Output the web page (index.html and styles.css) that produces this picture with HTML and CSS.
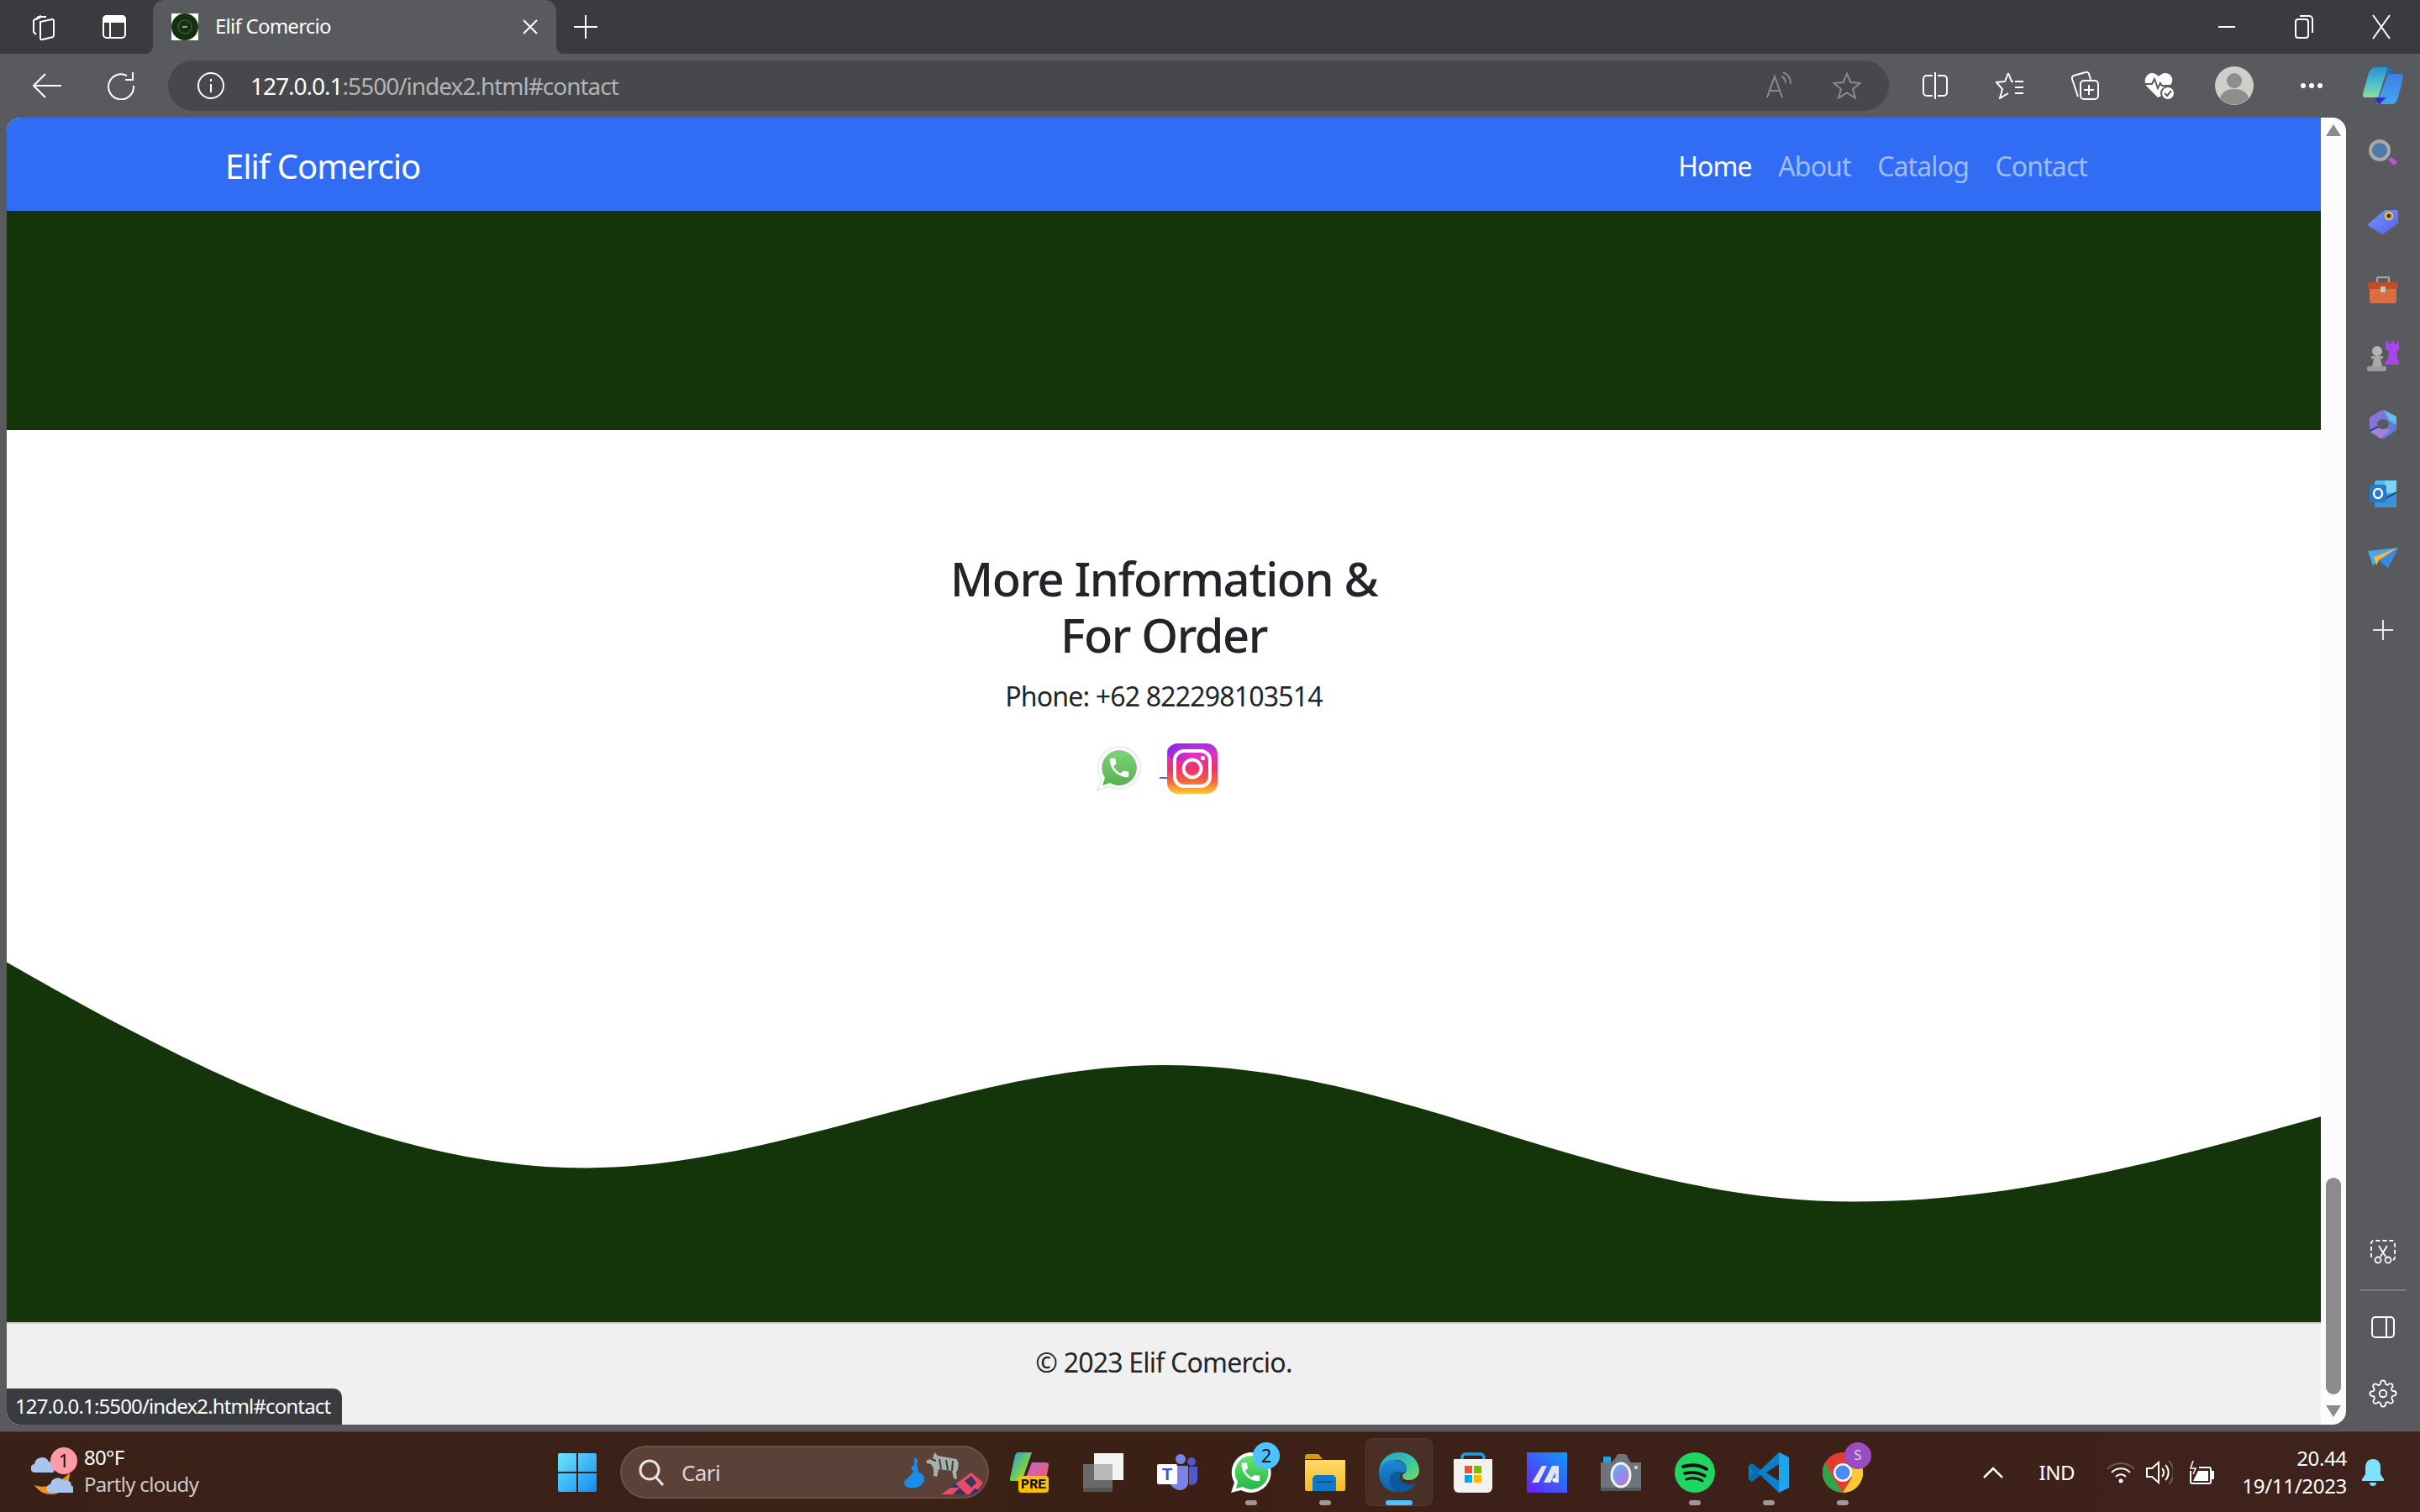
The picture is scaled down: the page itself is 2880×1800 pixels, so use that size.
FILE: index.html
```html
<!DOCTYPE html>
<html lang="en">
	<head>
		<meta charset="UTF-8">
		<title>Elif Comercio</title>
		<link rel="stylesheet" href="styles.css">
	</head>
	<body>
		<!-- tab strip -->
		<div class="tabstrip">
			<div class="strip-btn">
				<svg width="34" height="34" viewBox="0 0 34 34" fill="none" stroke="#fff" stroke-width="2"><path d="M5 9l6-3M5 9v14l3 3M9 6l5-2M8 8l6-3 6 0"/><path d="M14 11l14-3a2 2 0 0 1 2 2v17a2 2 0 0 1-1 2l-12 3a2 2 0 0 1-3-2z" transform="translate(-1 0)"/></svg>
			</div>
			<div class="strip-btn">
				<svg width="30" height="30" viewBox="0 0 30 30" fill="none" stroke="#fff" stroke-width="2"><rect x="2" y="2" width="26" height="26" rx="4"/><path d="M2 9V6a4 4 0 0 1 4-4h18a4 4 0 0 1 4 4v3z" fill="#fff"/><path d="M10 9v19"/></svg>
			</div>
			<div class="tab">
				<svg class="favicon" width="32" height="32" viewBox="0 0 32 32"><rect width="32" height="32" fill="#fff"/><circle cx="16" cy="16" r="16" fill="#14300f"/><circle cx="16" cy="16" r="8" fill="none" stroke="#3a5a30" stroke-width="1.5"/><rect x="13" y="15" width="6" height="2" fill="#9aa890"/></svg>
				<span class="tab-title">Elif Comercio</span>
				<svg class="tab-close" width="20" height="20" viewBox="0 0 20 20" stroke="#fff" stroke-width="2"><path d="M2 2l16 16M18 2L2 18"/></svg>
			</div>
			<div class="plus-btn">
				<svg width="30" height="30" viewBox="0 0 30 30" stroke="#fff" stroke-width="2"><path d="M15 1v28M1 15h28"/></svg>
			</div>
			<div class="win-controls">
				<div class="win-btn"><svg width="20" height="20" viewBox="0 0 20 20" stroke="#fff" stroke-width="2"><path d="M0 10h20"/></svg></div>
				<div class="win-btn"><svg width="22" height="30" viewBox="0 0 22 30" fill="none" stroke="#fff" stroke-width="2"><rect x="1" y="6" width="15" height="22" rx="3"/><path d="M6 2h11a4 4 0 0 1 4 4v16"/></svg></div>
				<div class="win-btn"><svg width="22" height="30" viewBox="0 0 22 30" stroke="#fff" stroke-width="2"><path d="M1 1l20 28M21 1L1 29"/></svg></div>
			</div>
		</div>

		<!-- toolbar -->
		<div class="toolbar">
			<div class="tool-btn">
				<svg width="34" height="30" viewBox="0 0 34 30" fill="none" stroke="#fff" stroke-width="2"><path d="M15 1L1 15l14 14M1 15h33"/></svg>
			</div>
			<div class="tool-btn">
				<svg width="34" height="34" viewBox="0 0 34 34" fill="none" stroke="#fff" stroke-width="2"><path d="M24 5A15 15 0 1 0 32 17"/><path d="M31 1v9h-9"/></svg>
			</div>
			<div class="address">
				<svg width="32" height="32" viewBox="0 0 32 32" fill="none" stroke="#fff" stroke-width="2"><circle cx="16" cy="16" r="15"/><path d="M16 14v10M16 8v3"/></svg>
				<div class="url"><span class="url-host">127.0.0.1</span>:5500/index2.html#contact</div>
				<svg class="addr-read" width="32" height="32" viewBox="0 0 32 32" fill="none" stroke="#8a8b8e" stroke-width="2"><path d="M1 30L10 5l9 25M4 22h12"/><path d="M18 5c3 1 5 4 5 8M20 0c5 2 9 7 9 14"/></svg>
				<svg class="addr-star" width="34" height="32" viewBox="0 0 34 32" fill="none" stroke="#8a8b8e" stroke-width="2"><path d="M17 2l4.500 10 11 1-8.500 7 3 10.500-10-6-10 6 3-10.500-8.500-7 11-1z"/></svg>
			</div>
			<div class="tool-group">
				<div class="tool-btn tool-btn-r">
					<svg width="30" height="32" viewBox="0 0 30 32" fill="none" stroke="#fff" stroke-width="2"><path d="M12 4H5a4 4 0 0 0-4 4v16a4 4 0 0 0 4 4h7M18 4h7a4 4 0 0 1 4 4v16a4 4 0 0 1-4 4h-7M15 0v32"/></svg>
				</div>
				<div class="tool-btn tool-btn-r">
					<svg width="34" height="32" viewBox="0 0 34 32" fill="none" stroke="#fff" stroke-width="2"><path d="M15 1l4 10 2 0M11 11l4-10M11 11L1 12l7 8-3 11 10-6"/><path d="M23 11h10M23 18h10M23 25h10"/></svg>
				</div>
				<div class="tool-btn tool-btn-r">
					<svg width="34" height="34" viewBox="0 0 34 34" fill="none" stroke="#fff" stroke-width="2"><path d="M9 30L2 9a3 3 0 0 1 2-4l14-4a3 3 0 0 1 4 2l2 7"/><rect x="12" y="11" width="21" height="22" rx="4"/><path d="M22 16v12M16 22h12"/></svg>
				</div>
				<div class="tool-btn tool-btn-r">
					<svg width="36" height="34" viewBox="0 0 36 34"><path d="M16 31L3 18C-2 12 2 2 9 2c3 0 6 2 8 4 2-2 5-4 8-4 7 0 11 8 6 14L25 27z" fill="#fff"/><path d="M1 15h8l3-6 4 11 3-6 2 3h12" fill="none" stroke="#595a5e" stroke-width="2"/><circle cx="28" cy="26" r="8" fill="#fff" stroke="#595a5e" stroke-width="2"/><path d="M24 26l3 3 5-6" fill="none" stroke="#595a5e" stroke-width="2"/></svg>
				</div>
				<div class="tool-btn tool-btn-r">
					<svg width="46" height="46" viewBox="0 0 46 46"><circle cx="23" cy="23" r="23" fill="#cfcecb"/><circle cx="23" cy="17" r="9" fill="#8d8d8b"/><path d="M6 38c2-8 9-11 17-11s15 3 17 11a23 23 0 0 1-34 0z" fill="#8d8d8b"/></svg>
				</div>
				<div class="tool-btn tool-btn-more">
					<svg width="26" height="8" viewBox="0 0 26 8" fill="#fff"><circle cx="3" cy="4" r="3"/><circle cx="13" cy="4" r="3"/><circle cx="23" cy="4" r="3"/></svg>
				</div>
				<div class="tool-copilot">
					<svg width="48" height="44" viewBox="0 0 48 44">
						<defs>
							<linearGradient id="cpA" x1="0" y1="0" x2="0" y2="1"><stop offset="0" stop-color="#2a8fd0"/><stop offset=".6" stop-color="#58c4c8"/><stop offset="1" stop-color="#8ddc9a"/></linearGradient>
							<linearGradient id="cpB" x1="0" y1="0" x2="0" y2="1"><stop offset="0" stop-color="#3e7fe6"/><stop offset="1" stop-color="#44a6ee"/></linearGradient>
						</defs>
						<path d="M14 0h16l-12 36H3a3 3 0 0 1-3-4l6-22C8 4 10 0 14 0z" fill="url(#cpA)"/>
						<path d="M30 0c3 0 4 2 6 8l-8 0z" fill="#1e6fb8"/>
						<path d="M30 8h15a3 3 0 0 1 3 4l-6 24c-2 6-4 8-8 8H16z" fill="url(#cpB)"/>
						<path d="M18 36h10l-8 8c-3 0-4-3-6-8z" fill="#2a36c0"/>
					</svg>
				</div>
			</div>
		</div>

		<div class="main">
			<div class="window">
				<div class="page">
					<div class="navbar">
						<a class="brand" href="#">Elif Comercio</a>
						<div class="nav-links">
							<a class="active" href="#">Home</a>
							<a href="#">About</a>
							<a href="#">Catalog</a>
							<a href="#">Contact</a>
						</div>
					</div>
					<div class="band"></div>
					<div class="contact">
						<h2>More Information &amp;<br>For Order</h2>
						<p>Phone: +62 822298103514</p>
						<div class="socials">
							<svg class="wa" width="54" height="54" viewBox="0 0 54 54">
								<defs>
									<linearGradient id="waG" x1="0" y1="0" x2="0" y2="1"><stop offset="0" stop-color="#7fd27a"/><stop offset="1" stop-color="#56b24f"/></linearGradient>
								</defs>
								<path d="M27 1a25 25 0 1 1-12 47L1 53l5-13A25 25 0 0 1 27 1z" fill="#fff" stroke="#e8e8e8" stroke-width="1.500"/>
								<path d="M27 5a21 21 0 1 1-11 39l-9 3 3-9A21 21 0 0 1 27 5z" fill="url(#waG)"/>
								<path transform="translate(12 11) scale(1.250)" d="M6.620 10.790c1.440 2.830 3.760 5.140 6.590 6.590l2.200-2.200c.27-.27.67-.36 1.020-.24 1.120.37 2.330.57 3.570.57.55 0 1 .45 1 1V20c0 .55-.45 1-1 1-9.390 0-17-7.610-17-17 0-.55.45-1 1-1h3.500c.55 0 1 .45 1 1 0 1.250.2 2.450.57 3.570.11.35.03.74-.25 1.020l-2.200 2.200z" fill="#fff"/>
							</svg>
							<a class="ig-link" href="#">
								<svg width="60" height="60" viewBox="0 0 60 60">
									<defs>
										<linearGradient id="igG" x1="0" y1="1" x2="0" y2="0"><stop offset="0" stop-color="#fdc935"/><stop offset=".25" stop-color="#f3653a"/><stop offset=".5" stop-color="#ef2f6e"/><stop offset=".8" stop-color="#e032c8"/><stop offset="1" stop-color="#a030e8"/></linearGradient>
										<linearGradient id="igH" x1="0" y1="0" x2="1" y2="0"><stop offset="0" stop-color="#7a20f0" stop-opacity=".7"/><stop offset=".5" stop-color="#7a20f0" stop-opacity="0"/></linearGradient>
									</defs>
									<rect width="60" height="60" rx="13" fill="url(#igG)"/>
									<rect width="60" height="20" rx="13" fill="url(#igH)"/>
									<rect x="9" y="9" width="42" height="42" rx="11" fill="none" stroke="#fff" stroke-width="4"/>
									<circle cx="30" cy="30" r="10.500" fill="none" stroke="#fff" stroke-width="4"/>
									<circle cx="42.500" cy="17.500" r="2.600" fill="#fff"/>
								</svg>
							</a>
						</div>
					</div>
					<svg class="wave" viewBox="0 0 1440 320" preserveAspectRatio="none"><path d="M0,96 C120,165 240,224 360,224 C480,224 600,160 720,160 C870,160 990,245 1150,245 C1250,245 1340,220 1440,192 L1440,320 L0,320 Z" fill="#14340a"/></svg>
					<div class="footer">© 2023 Elif Comercio.</div>
				</div>
				<div class="scrollbar">
					<div class="arrow-up"></div>
					<div class="thumb"></div>
					<div class="arrow-down"></div>
				</div>
				<div class="status">127.0.0.1:5500/index2.html#contact</div>
			</div>

			<!-- edge sidebar -->
			<div class="sidebar">
				<div class="side-btn">
					<svg width="36" height="36" viewBox="0 0 36 36"><circle cx="14" cy="14" r="11" fill="#4f7aa6" stroke="#a9a9a9" stroke-width="4"/><path d="M24 25l4-3 7 6-4 4z" fill="#c04fe0"/></svg>
				</div>
				<div class="side-btn">
					<svg width="36" height="30" viewBox="0 0 36 30"><defs><linearGradient id="tagG" x1="0" y1="0" x2="1" y2="1"><stop offset="0" stop-color="#6c9cf8"/><stop offset="1" stop-color="#5a5cec"/></linearGradient></defs><path d="M1 17L20 1h14a2 2 0 0 1 2 2v14L19 29a3 3 0 0 1-4 0L1 20a2 2 0 0 1 0-3z" fill="url(#tagG)"/><circle cx="25" cy="8" r="4" fill="#3a3a50" stroke="#f2c53a" stroke-width="2.500"/></svg>
				</div>
				<div class="side-btn">
					<svg width="36" height="32" viewBox="0 0 36 32"><path d="M11 7V3a2 2 0 0 1 2-2h10a2 2 0 0 1 2 2v4" fill="none" stroke="#a0a0a0" stroke-width="2.500"/><path d="M2 14h32v15a3 3 0 0 1-3 3H5a3 3 0 0 1-3-3z" fill="#d86f42"/><rect y="7" width="36" height="8" rx="2" fill="#bf4f28"/><rect x="15" y="12" width="6" height="7" rx="1" fill="#c4c4c4"/></svg>
				</div>
				<div class="side-btn">
					<svg class="side-up" width="38" height="36" viewBox="0 0 38 36"><path d="M22 0h3v3h4V0h3v3h4V0h2v10l-3 2 1 10 3 3v3H21v-3l4-3 1-10-4-2z" fill="#a846ec"/><circle cx="12" cy="12" r="6" fill="#b4b4b4"/><path d="M5 18h14v3h-3l2 9h-12l2-9H5z" fill="#a8a8a8"/><rect y="30" width="23" height="6" rx="2" fill="#9c9c9c"/></svg>
				</div>
				<div class="side-btn">
					<svg class="side-up" width="32" height="36" viewBox="0 0 32 36"><defs><linearGradient id="msG" x1="0" y1="0" x2="1" y2="1"><stop offset="0" stop-color="#9a6fd8"/><stop offset="1" stop-color="#4a7fe0"/></linearGradient></defs><path d="M0 10L13 2c2-1 4-1 6 0l13 7v16l-13 9c-3 2-5 2-8 0L0 27z" fill="url(#msG)"/><path d="M17 1l15 8v10l-9-6z" fill="#5cc0e8"/><path d="M0 25l10-6 14 7-11 9z" fill="#a77fd6"/><path d="M0 26l18-9" stroke="#1d3f8a" stroke-width="2"/><ellipse cx="16" cy="18" rx="7" ry="6" fill="#595a5e"/></svg>
				</div>
				<div class="side-btn">
					<svg width="32" height="32" viewBox="0 0 32 32"><rect x="6" width="26" height="32" rx="2" fill="#55b8ee"/><rect x="18" width="14" height="14" fill="#7cd4f8"/><path d="M6 16l26 0v14a2 2 0 0 1-2 2H8a2 2 0 0 1-2-2z" fill="#3a93d8"/><path d="M18 22l14-8" stroke="#14447a" stroke-width="2"/><rect y="5" width="20" height="21" rx="3" fill="#2878c8"/><ellipse cx="10" cy="15.500" rx="5" ry="5.500" fill="none" stroke="#fff" stroke-width="2.500"/></svg>
				</div>
				<div class="side-btn">
					<svg class="side-send" width="36" height="24" viewBox="0 0 36 24"><path d="M0 4l36-4-12 24-12-10-6 8z" fill="#4aa6ec"/><path d="M36 0L7 11l3 10 3-6z" fill="#f2b93a"/><path d="M13 15l11 9 12-24z" fill="#3a88e0"/></svg>
				</div>
				<div class="side-btn">
					<svg width="24" height="24" viewBox="0 0 24 24" stroke="#e8e8e8" stroke-width="2"><path d="M12 0v24M0 12h24"/></svg>
				</div>
				<div class="side-spacer"></div>
				<div class="side-btn">
					<svg width="32" height="30" viewBox="0 0 32 30" fill="none" stroke="#fff" stroke-width="1.800"><path d="M2 22V5a3 3 0 0 1 3-3h22a3 3 0 0 1 3 3v17a3 3 0 0 1-3 3" stroke-dasharray="5 3"/><path d="M11 8l8 13M21 8l-8 13"/><circle cx="10" cy="25" r="3.500"/><circle cx="22" cy="25" r="3.500"/></svg>
				</div>
				<div class="side-line"></div>
				<div class="side-btn side-panel">
					<svg width="28" height="26" viewBox="0 0 28 26" fill="none" stroke="#fff" stroke-width="2"><rect x="1" y="1" width="26" height="24" rx="4"/><path d="M18 1v24"/></svg>
				</div>
				<div class="side-btn side-gear">
					<svg width="34" height="34" viewBox="0 0 24 24" fill="none" stroke="#fff" stroke-width="1.300"><circle cx="12" cy="12" r="3"/><path d="M19.400 15a1.650 1.650 0 0 0 .33 1.820l.06.06a2 2 0 1 1-2.830 2.830l-.06-.06a1.650 1.650 0 0 0-2.800 1.170V21a2 2 0 1 1-4 0v-.09a1.650 1.650 0 0 0-2.800-1.170l-.06.06a2 2 0 1 1-2.830-2.830l.06-.06a1.650 1.650 0 0 0-1.170-2.800H3a2 2 0 1 1 0-4h.09a1.650 1.650 0 0 0 1.170-2.800l-.06-.06a2 2 0 1 1 2.830-2.830l.06.06a1.650 1.650 0 0 0 2.800-1.170V3a2 2 0 1 1 4 0v.09a1.650 1.650 0 0 0 2.800 1.170l.06-.06a2 2 0 1 1 2.830 2.830l-.06.06a1.650 1.650 0 0 0 1.170 2.800H21a2 2 0 1 1 0 4h-.09a1.650 1.650 0 0 0-1.510 1.110z"/></svg>
				</div>
			</div>
		</div>

		<!-- windows taskbar -->
		<div class="taskbar">
			<div class="weather">
				<div class="weather-icon">
					<svg width="50" height="54" viewBox="0 0 50 54">
						<path d="M46 27c0 12-7 26-22 26-9 0-15-4-20-11 10 3 17 2 24-2 8-4 14-8 18-13z" fill="#f0921c"/>
						<path d="M5 27a5 5 0 0 1-1-10 9 9 0 0 1 17-3 6 6 0 0 1 5 8 3 3 0 0 1 0 5z" fill="#a9c4ef"/>
						<path d="M24 51a5 5 0 0 1-1-10 9 9 0 0 1 16-4 6 6 0 0 1 9 6 4 4 0 0 1 0 8z" fill="#a9c4ef"/>
					</svg>
					<span class="weather-badge">1</span>
				</div>
				<div class="weather-text">
					<div class="temp">80°F</div>
					<div class="cond">Partly cloudy</div>
				</div>
			</div>
			<div class="tb-start">
				<svg width="46" height="46" viewBox="0 0 46 46"><defs><linearGradient id="winG" x1="0" y1="0" x2="1" y2="1"><stop offset="0" stop-color="#6fe6ff"/><stop offset="1" stop-color="#0f8cf0"/></linearGradient></defs><path d="M0 2a2 2 0 0 1 2-2h20v22H0zM24 0h20a2 2 0 0 1 2 2v20H24zM0 24h22v22H2a2 2 0 0 1-2-2zM24 24h22v20a2 2 0 0 1-2 2H24z" fill="url(#winG)"/></svg>
			</div>
			<div class="search">
				<svg width="30" height="32" viewBox="0 0 30 32" fill="none" stroke="#e8e4e2" stroke-width="3"><circle cx="13" cy="13" r="11"/><path d="M21 22l8 9"/></svg>
				<span class="search-text">Cari</span>
				<svg class="search-art" width="94" height="50" viewBox="0 0 94 50">
					<path transform="translate(0 2) scale(1 .84)" d="M12 6a4 4 0 0 1 3 7l2 12c5 3 7 6 7 10 0 8-7 13-14 13-6 0-10-3-10-7 0-5 7-8 11-16l-1-2a4 4 0 0 1 2-7z" fill="#1a8cea"/>
					<path d="M26 10l8-3 2-7 4 4 22 4c4 3 3 12 0 16l1 8-4-1-2-9-16-2-2 9-4-1v-9l-3-5-5-1z" fill="#a8b0aa"/>
					<path d="M32 8l6 2M42 8l2 12M50 9l2 12M58 10l-1 12" stroke="#3a3e3c" stroke-width="2" fill="none"/>
					<path d="M44 50l36-26 14 12-10 14z" fill="#e84a6a"/>
					<path d="M58 50l8-8 8 8zM72 34l8-6 6 8-6 6zM54 42l6-6 6 6zM78 50l6-7 6 2-4 5z" fill="#3a3460"/>
				</svg>
			</div>
			<div class="tb-apps">
				<div class="tb-app">
					<svg width="46" height="48" viewBox="0 0 46 48">
						<defs><linearGradient id="preA" x1="0" y1="0" x2="1" y2="1"><stop offset="0" stop-color="#1e9ce8"/><stop offset=".6" stop-color="#7cd04a"/><stop offset="1" stop-color="#f0d020"/></linearGradient><linearGradient id="preB" x1="0" y1="0" x2="1" y2="1"><stop offset="0" stop-color="#c060e0"/><stop offset="1" stop-color="#f06050"/></linearGradient></defs>
						<path d="M10 0h16L14 34H1a2 2 0 0 1-1-3L5 8c1-5 2-8 5-8z" fill="url(#preA)"/>
						<path d="M26 12h17a3 3 0 0 1 3 4l-3 16H18z" fill="url(#preB)"/>
						<rect x="10" y="28" width="36" height="20" rx="4" fill="#ffc000"/>
						<text class="pre-text" x="28" y="43" text-anchor="middle">PRE</text>
					</svg>
				</div>
				<div class="tb-app">
					<svg width="48" height="46" viewBox="0 0 48 46"><rect x="13" width="35" height="32" fill="#f4f4f4"/><rect y="13" width="35" height="33" fill="#6a6a6a"/><rect x="13" y="13" width="22" height="19" fill="#b8b8b8"/><rect y="41" width="35" height="5" fill="#555"/></svg>
				</div>
				<div class="tb-app">
					<svg width="48" height="44" viewBox="0 0 48 44">
						<circle cx="28" cy="6" r="6" fill="#7b83eb"/><circle cx="41" cy="9" r="5" fill="#5059c9"/>
						<path d="M15 14h22v20a9 9 0 0 1-9 9c-7 0-13-5-13-12z" fill="#7b83eb"/><path d="M38 15h10v15c0 5-4 8-10 6z" fill="#5059c9"/>
						<rect y="12" width="24" height="24" rx="2" fill="#fff"/><text class="teams-t" x="12" y="31" text-anchor="middle">T</text>
					</svg>
				</div>
				<div class="tb-app">
					<svg width="50" height="50" viewBox="0 0 50 50"><defs><linearGradient id="waT" x1="0" y1="0" x2="0" y2="1"><stop offset="0" stop-color="#6be36e"/><stop offset="1" stop-color="#22b84a"/></linearGradient></defs><path d="M25 1a24 24 0 1 1-12 45L1 49l4-12A24 24 0 0 1 25 1z" fill="#fff"/><path d="M25 5a20 20 0 1 1-10 37l-8 2 2-8A20 20 0 0 1 25 5z" fill="url(#waT)"/><path transform="translate(10 10) scale(1.200)" d="M6.620 10.790c1.440 2.830 3.760 5.140 6.590 6.590l2.200-2.200c.27-.27.67-.36 1.020-.24 1.120.37 2.330.57 3.570.57.55 0 1 .45 1 1V20c0 .55-.45 1-1 1-9.390 0-17-7.610-17-17 0-.55.45-1 1-1h3.500c.55 0 1 .45 1 1 0 1.250.2 2.450.57 3.570.11.35.03.74-.25 1.020l-2.200 2.200z" fill="#fff"/></svg>
					<span class="app-badge app-badge-blue">2</span>
					<span class="pill"></span>
				</div>
				<div class="tb-app">
					<svg width="48" height="44" viewBox="0 0 48 44"><defs><linearGradient id="foldG" x1="0" y1="0" x2="0" y2="1"><stop offset="0" stop-color="#ffdb6a"/><stop offset="1" stop-color="#fbb81e"/></linearGradient></defs><path d="M0 3a3 3 0 0 1 3-3h13l5 6H0z" fill="#d99a00"/><path d="M0 7h48v35a2 2 0 0 1-2 2H2a2 2 0 0 1-2-2z" fill="url(#foldG)"/><path d="M9 44V30a5 5 0 0 1 5-5h18a5 5 0 0 1 5 5v14z" fill="#0f78c8"/><rect x="14" y="32" width="18" height="2" fill="#0a4f90"/></svg>
					<span class="pill"></span>
				</div>
				<div class="tb-app tb-app-active">
					<svg width="48" height="48" viewBox="0 0 48 48">
						<defs><linearGradient id="edgeA" x1="0" y1="0" x2="1" y2="1"><stop offset="0" stop-color="#1fa0d8"/><stop offset=".6" stop-color="#3ec9a0"/><stop offset="1" stop-color="#7ad85a"/></linearGradient><linearGradient id="edgeB" x1="0" y1="0" x2="0" y2="1"><stop offset="0" stop-color="#1d8ad8"/><stop offset="1" stop-color="#0f5fa8"/></linearGradient></defs>
						<path d="M24 0c14 0 24 10 24 22 0 6-5 11-12 11-5 0-8-2-8-5 0-3 5-3 5-8C33 13 26 8 18 9 8 10 2 16 0 24 1 10 10 0 24 0z" fill="url(#edgeA)"/>
						<path d="M0 24c1-10 10-15 18-15 8 0 15 5 15 11 0 3-3 4-6 4-7-3-14 0-14 9 0 6 4 11 11 14C11 49 0 38 0 24z" fill="url(#edgeB)"/>
						<path d="M27 24c-7-3-14 0-14 9 0 6 4 11 11 14 8 1 17-3 21-11-3 2-6 3-10 2-8-1-13-6-8-14z" fill="#0c5a9e"/>
					</svg>
					<span class="pill pill-edge"></span>
				</div>
				<div class="tb-app">
					<svg width="46" height="48" viewBox="0 0 46 48"><path d="M10 10V6a4 4 0 0 1 4-4h18a4 4 0 0 1 4 4v4" fill="none" stroke="#1aa0e8" stroke-width="3.500"/><path d="M0 8h46v34a6 6 0 0 1-6 6H6a6 6 0 0 1-6-6z" fill="#f4f2f0"/><rect x="13" y="16" width="9" height="9" fill="#f25022"/><rect x="24" y="16" width="9" height="9" fill="#7fba00"/><rect x="13" y="27" width="9" height="9" fill="#00a4ef"/><rect x="24" y="27" width="9" height="9" fill="#ffb900"/></svg>
				</div>
				<div class="tb-app">
					<svg width="48" height="48" viewBox="0 0 48 48"><defs><linearGradient id="maG" x1="1" y1="0" x2="0" y2="1"><stop offset="0" stop-color="#0a9cf8"/><stop offset="1" stop-color="#6a20f8"/></linearGradient></defs><rect width="48" height="48" fill="url(#maG)"/><path d="M6 36l12-20h6L14 36zM20 36l10-20h8v20h-4V24l-6 12z" fill="#e4e4f8"/><circle cx="33" cy="33" r="2.500" fill="#fff"/></svg>
				</div>
				<div class="tb-app">
					<svg width="48" height="44" viewBox="0 0 48 44"><rect x="3" y="3" width="9" height="7" fill="#2aa0d8"/><path d="M0 10h13l5-6c0-2 2-4 4-4h6c2 0 4 2 4 4l4 6h12v34H0z" fill="#6f7479"/><rect y="40" width="48" height="4" fill="#55585c"/><defs><linearGradient id="camG" x1="0" y1="0" x2="1" y2="1"><stop offset="0" stop-color="#5ab0f0"/><stop offset="1" stop-color="#c070d8"/></linearGradient></defs><ellipse cx="24" cy="25" rx="11" ry="14" fill="url(#camG)" stroke="#f2f2f2" stroke-width="3"/><circle cx="42" cy="16" r="2" fill="#ddd"/></svg>
				</div>
				<div class="tb-app">
					<svg width="48" height="48" viewBox="0 0 48 48" fill="none" stroke="#111" stroke-linecap="round"><circle cx="24" cy="24" r="24" fill="#1ed760" stroke="none"/><path d="M10 17c10-3 20-2 28 3" stroke-width="4"/><path d="M12 25c8-2 17-1 24 3" stroke-width="3.500"/><path d="M14 32c7-2 14-1 19 2" stroke-width="3"/></svg>
					<span class="pill"></span>
				</div>
				<div class="tb-app">
					<svg width="48" height="48" viewBox="0 0 48 48"><path d="M36 0l12 6v36l-12 6L14 27 4 35l-4-3V16l4-3 10 8z" fill="#0b7fc8"/><path d="M36 0l12 6v36l-12 6z" fill="#1fa3ec"/><path d="M36 14L21 24l15 10z" fill="#3b2118"/><path d="M0 16l4-3 10 8-4 3 4 3-10 8-4-3 6-8z" fill="#0a6bb0"/></svg>
					<span class="pill"></span>
				</div>
				<div class="tb-app">
					<svg width="48" height="48" viewBox="0 0 48 48"><circle cx="24" cy="24" r="24" fill="#e33b2e"/><path d="M3 12l12 22 9 14a24 24 0 0 1-21-36z" fill="#2fa44f"/><path d="M24 14h22a24 24 0 0 1-22 34l11-18z" fill="#fcc934"/><circle cx="24" cy="24" r="11" fill="#fff"/><circle cx="24" cy="24" r="8.500" fill="#4a8af4"/></svg>
					<span class="app-badge app-badge-purple">S</span>
					<span class="pill"></span>
				</div>
			</div>
			<div class="tray">
				<svg class="tray-chev" width="24" height="14" viewBox="0 0 24 14" fill="none" stroke="#fff" stroke-width="2.500"><path d="M1 13L12 2l11 11"/></svg>
				<span class="tray-lang">IND</span>
				<svg class="tray-wifi" width="34" height="26" viewBox="0 0 34 26" fill="none" stroke="#fff" stroke-width="2"><path d="M1 9a22 22 0 0 1 32 0" stroke="#6a5a55"/><path d="M6 13a15 15 0 0 1 22 0M11 18a8 8 0 0 1 12 0"/><circle cx="17" cy="23" r="2.500" fill="#fff" stroke="none"/></svg>
				<svg class="tray-vol" width="32" height="30" viewBox="0 0 32 30" fill="none" stroke="#fff" stroke-width="2"><path d="M1 10h6l8-7v24l-8-7H1z"/><path d="M19 10a7 7 0 0 1 0 10M23 6a13 13 0 0 1 0 18"/><path d="M27 1a20 20 0 0 1 0 28" stroke="#6a5a55"/></svg>
				<svg class="tray-bat" width="32" height="28" viewBox="0 0 32 28" fill="none" stroke="#fff" stroke-width="2"><path d="M4 12v13a2 2 0 0 0 2 2h20a2 2 0 0 0 2-2V10a2 2 0 0 0-2-2H14"/><path d="M28 13h3v8h-3" fill="#fff"/><path d="M7 24l6-12h12v12z" fill="#fff" stroke="none"/><path d="M7 0L4 9h6l-3 7" stroke-width="1.500"/></svg>
				<div class="clock">
					<div>20.44</div>
					<div>19/11/2023</div>
				</div>
				<svg class="tray-bell" width="26" height="32" viewBox="0 0 26 32" fill="#7fe2fa"><path d="M13 0c6 0 9 4 9 10v8l4 6v2H0v-2l4-6v-8C4 4 7 0 13 0z"/><path d="M9 28h8a4 4 0 0 1-8 0z"/></svg>
			</div>
		</div>
	</body>
</html>
```

FILE: styles.css
```css
* {
	margin: 0;
	padding: 0;
	box-sizing: border-box;
}

html,
body {
	width: 2880px;
	height: 1800px;
	overflow: hidden;
}

body {
	background-color: #595a5e;
	font-family: "Noto Sans", "Open Sans", sans-serif;
	color: #212529;
}

a {
	text-decoration: none;
}

/* tab strip */
.tabstrip {
	display: flex;
	height: 64px;
	background-color: #3a3b3f;
	padding-left: 10px;
}

.strip-btn {
	width: 84px;
	display: flex;
	align-items: center;
	justify-content: center;
}

.tab {
	position: relative;
	width: 480px;
	margin-left: 4px;
	display: flex;
	align-items: center;
	padding: 0 21px 0 22px;
	background-color: #595a5e;
	border-radius: 14px 14px 0 0;
	color: #fff;
}

.tab::before,
.tab::after {
	content: "";
	position: absolute;
	bottom: 0;
	width: 10px;
	height: 10px;
}

.tab::before {
	left: -10px;
	background: radial-gradient(circle at 0 0, #3a3b3f 10px, #595a5e 10.500px);
}

.tab::after {
	right: -10px;
	background: radial-gradient(circle at 100% 0, #3a3b3f 10px, #595a5e 10.500px);
}

.tab-title {
	margin: 0 0 3px 20px;
	font-size: 24px;
	letter-spacing: -0.75px;
}

.tab-close {
	margin-left: auto;
}

.plus-btn {
	width: 70px;
	display: flex;
	align-items: center;
	justify-content: center;
}

.win-controls {
	display: flex;
	margin-left: auto;
}

.win-btn {
	width: 92px;
	display: flex;
	align-items: center;
	justify-content: center;
}

/* toolbar */
.toolbar {
	display: flex;
	align-items: center;
	height: 76px;
	padding: 0 0 0 12px;
}

.tool-btn {
	width: 88px;
	display: flex;
	align-items: center;
	justify-content: center;
}

.address {
	width: 2048px;
	height: 60px;
	margin-left: 12px;
	padding-left: 35px;
	display: flex;
	align-items: center;
	background-color: #47484c;
	border-radius: 30px;
}

.url {
	margin-left: 31px;
	font-size: 28px;
	letter-spacing: -1px;
	color: #b4b4b6;
}

.url-host {
	color: #fff;
}

.addr-read {
	margin-left: auto;
}

.addr-star {
	margin: 0 33px 0 47px;
}

.tool-group {
	display: flex;
	align-items: center;
	margin-left: 10px;
}

.tool-btn-r {
	width: 89px;
}

.tool-btn-more {
	width: 95px;
}

.tool-copilot {
	margin-left: 14px;
	display: flex;
}

/* page */
.main {
	display: flex;
	height: 1556px;
	padding-left: 8px;
}

.window {
	position: relative;
	display: flex;
	width: 2784px;
	border-radius: 16px;
	overflow: hidden;
}

.page {
	width: 2754px;
	background-color: #fff;
	display: flex;
	flex-direction: column;
}

.navbar {
	flex: none;
	height: 111px;
	display: flex;
	align-items: center;
	background-color: #316cf4;
	padding: 3px 278px 0 260px;
}

.brand {
	font-size: 40px;
	letter-spacing: -1.05px;
	color: #fff;
}

.nav-links {
	display: flex;
	gap: 31.6px;
	margin-left: auto;
}

.nav-links a {
	font-size: 32px;
	letter-spacing: -0.9px;
	color: rgba(255, 255, 255, 0.55);
}

.nav-links a.active {
	color: #fff;
}

.band {
	flex: none;
	height: 261px;
	background-color: #14340a;
}

.contact {
	flex: none;
	height: 450px;
	padding-top: 143px;
	text-align: center;
}

.contact h2 {
	font-size: 56px;
	font-weight: 500;
	line-height: 67px;
	letter-spacing: -1.45px;
}

.contact p {
	margin-top: 16px;
	font-size: 32px;
	line-height: 48px;
	letter-spacing: -0.8px;
}

.socials {
	display: flex;
	justify-content: center;
	align-items: center;
	margin-top: 32px;
	padding-right: 16px;
}

.ig-link {
	display: flex;
	margin-left: 30px;
	position: relative;
}

/* the stray underline on the link */
.ig-link::before {
	content: "";
	position: absolute;
	left: -9px;
	top: 40px;
	width: 9px;
	height: 2px;
	background-color: #316cf4;
}

.wave {
	flex: none;
	display: block;
	width: 100%;
	height: 612px;
}

.footer {
	flex: none;
	height: 122px;
	border-top: 2px solid #cfd0cc;
	background-color: #f0f0f0;
	padding-top: 24px;
	text-align: center;
	font-size: 32px;
	letter-spacing: -0.78px;
}

/* scrollbar */
.scrollbar {
	width: 30px;
	background-color: #fcfcfc;
	display: flex;
	flex-direction: column;
	align-items: center;
	padding: 8px 0 9px;
}

.arrow-up {
	width: 0;
	height: 0;
	border-left: 9px solid transparent;
	border-right: 9px solid transparent;
	border-bottom: 14px solid #8b8b8b;
}

.thumb {
	width: 18px;
	height: 258px;
	margin-top: auto;
	background-color: #8b8b8b;
	border-radius: 9px;
}

.arrow-down {
	width: 0;
	height: 0;
	margin-top: 13px;
	border-left: 9px solid transparent;
	border-right: 9px solid transparent;
	border-top: 14px solid #8b8b8b;
}

/* link status bubble */
.status {
	position: absolute;
	left: 0;
	bottom: 0;
	width: 399px;
	height: 43px;
	padding-left: 10px;
	background-color: #3a3b3f;
	border-radius: 0 10px 0 0;
	font-size: 24px;
	line-height: 42px;
	letter-spacing: -0.86px;
	color: #fff;
}

/* sidebar */
.sidebar {
	width: 88px;
	display: flex;
	flex-direction: column;
	align-items: center;
	padding-top: 2px;
}

.side-btn {
	flex: none;
	width: 100%;
	height: 81px;
	display: flex;
	align-items: center;
	justify-content: center;
}

.side-up {
	margin-bottom: 4px;
}

.side-send {
	margin-bottom: 9px;
}

.side-spacer {
	flex: 1;
}

.side-line {
	flex: none;
	width: 56px;
	height: 2px;
	margin-top: 5px;
	background-color: #7b7c80;
}

.side-panel {
	height: 85px;
}

.side-gear {
	height: 74px;
}

/* taskbar */
.taskbar {
	display: flex;
	align-items: center;
	height: 96px;
	margin-top: 8px;
	background: linear-gradient(90deg, #3a2118, #3c2016 50%, #3f221c);
	border-top: 1px solid #4a3530;
	color: #fff;
}

.weather {
	width: 643px;
	flex: none;
	display: flex;
	align-items: center;
	padding-left: 37px;
}

.weather-icon {
	position: relative;
	display: flex;
}

.weather-badge {
	position: absolute;
	left: 23px;
	top: -3px;
	width: 32px;
	height: 32px;
	border-radius: 50%;
	background-color: #ff9aa6;
	color: #111;
	font-size: 22px;
	line-height: 31px;
	text-align: center;
}

.weather-text {
	margin: 0 0 3px 13px;
	font-size: 24px;
	line-height: 32px;
	letter-spacing: -0.7px;
}

.cond {
	color: #d0c9c6;
}

.tb-start {
	flex: none;
	width: 88px;
	display: flex;
	justify-content: center;
}

.search {
	flex: none;
	width: 439px;
	height: 63px;
	margin-left: 7px;
	padding: 0 5px 0 20px;
	display: flex;
	align-items: center;
	background-color: #5b4138;
	border: 2px solid #6a5148;
	border-radius: 32px;
	overflow: hidden;
}

.search-text {
	margin-left: 21px;
	font-size: 26px;
	letter-spacing: -0.6px;
	color: #dcd6d2;
}

.search-art {
	margin: 3px 0 0 auto;
	flex: none;
}

.tb-apps {
	display: flex;
	margin-left: 4px;
}

.tb-app {
	position: relative;
	width: 88px;
	height: 95px;
	display: flex;
	align-items: center;
	justify-content: center;
}

.tb-app-active::before {
	content: "";
	position: absolute;
	left: 4px;
	right: 4px;
	top: 7px;
	bottom: 7px;
	background-color: #4a2f27;
	border: 1px solid #523830;
	border-radius: 8px;
}

.tb-app-active svg {
	position: relative;
}

.pill {
	position: absolute;
	left: 37px;
	bottom: 8px;
	width: 14px;
	height: 6px;
	border-radius: 3px;
	background-color: #a09896;
}

.pill-edge {
	left: 28px;
	width: 32px;
	background-color: #4cc2ff;
}

.app-badge {
	position: absolute;
	left: 46px;
	top: 12px;
	width: 32px;
	height: 32px;
	border-radius: 50%;
	text-align: center;
	font-size: 22px;
	line-height: 31px;
	color: #111;
}

.app-badge-blue {
	background-color: #4cc2ff;
}

.app-badge-purple {
	background-color: #9a4cc0;
	color: #e8d8f0;
	font-size: 16px;
}

.pre-text {
	font-family: "Liberation Mono", monospace;
	font-size: 17px;
	font-weight: bold;
	fill: #111;
}

.teams-t {
	font-family: "Liberation Sans", sans-serif;
	font-size: 20px;
	font-weight: bold;
	fill: #4a52c0;
}

.tray {
	margin-left: auto;
	display: flex;
	align-items: center;
	padding-right: 43px;
}

.tray-lang {
	margin-left: 43px;
	font-size: 24px;
	letter-spacing: -0.5px;
}

.tray-wifi {
	margin-left: 38px;
}

.tray-vol {
	margin-left: 13px;
}

.tray-bat {
	margin-left: 17px;
}

.clock {
	width: 126px;
	margin: 0 0 2px 32px;
	text-align: right;
	font-size: 24px;
	line-height: 33px;
	letter-spacing: -0.3px;
}

.tray-bell {
	margin-left: 18px;
}
```
